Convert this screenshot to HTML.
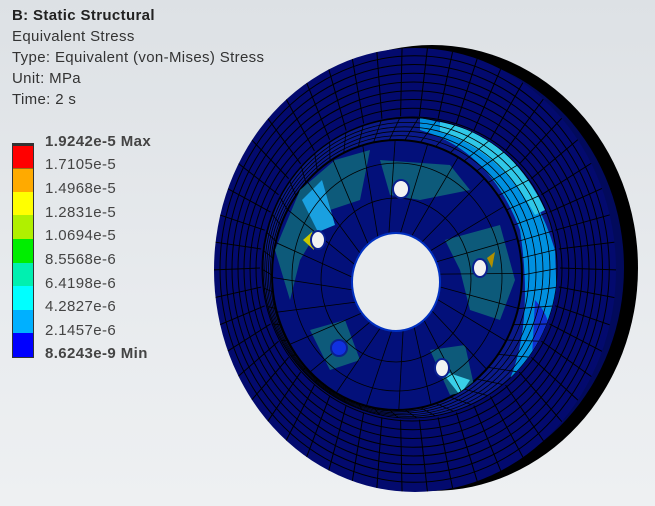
<!DOCTYPE html>
<html><head><meta charset="utf-8"><style>
html,body{margin:0;padding:0}
body{width:655px;height:506px;overflow:hidden;background:linear-gradient(180deg,#dde1e5 0%,#e8ebee 60%,#eef0f2 100%);font-family:"Liberation Sans",sans-serif;position:relative;color:#333}
.t{position:absolute;left:12px;font-size:15px;letter-spacing:0.35px;line-height:16px;white-space:nowrap}
.b{font-weight:bold;color:#222}
.lab{position:absolute;left:45px;font-size:15px;letter-spacing:0.4px;line-height:16px;color:#444;white-space:nowrap}
.bar{position:absolute;left:12px;width:20px;border:1px solid #333}
svg{position:absolute;left:0;top:0}
</style></head><body>
<svg width="655" height="506" viewBox="0 0 655 506">
<defs><clipPath id="face"><ellipse cx="415" cy="270" rx="201" ry="222"/></clipPath>
<clipPath id="hub"><ellipse cx="397" cy="275" rx="125" ry="135"/></clipPath>
<clipPath id="wall"><ellipse cx="410" cy="268" rx="147" ry="150"/></clipPath></defs>
<ellipse cx="432" cy="268" rx="206" ry="223" fill="#000"/>
<ellipse cx="428" cy="268" rx="196" ry="214" fill="#020a5c"/>
<ellipse cx="415" cy="270" rx="201" ry="222" fill="#030a6e"/>
<g id="outer" clip-path="url(#face)" stroke="#000" stroke-width="1" fill="none"></g>
<ellipse cx="410" cy="268" rx="147" ry="150" fill="#0a1a8a" stroke="#000"/>
<g clip-path="url(#wall)">
<path d="M420 118 Q520 135 555 250 L558 330 Q545 390 520 405 L505 390 Q535 330 520 230 Q490 150 420 130 Z" fill="#0090e0"/>
<path d="M440 122 Q510 135 545 210 L535 215 Q500 150 440 132 Z" fill="#30c8e8"/>
<path d="M535 300 Q555 320 552 360 L530 395 Z" fill="#1030d0"/>
</g>
<g id="wallmesh" clip-path="url(#wall)" stroke="#000" stroke-width="0.8" fill="none"></g>
<ellipse cx="397" cy="275" rx="125" ry="135" fill="#03107a" stroke="#000" stroke-width="2"/>
<g clip-path="url(#hub)">
<path d="M275 250 L300 190 L335 160 L370 150 L360 200 L330 210 L300 260 L290 300 Z" fill="#0d5a7a"/>
<path d="M302 200 L322 180 L335 225 L318 232 Z" fill="#1aa0e0"/>
<path d="M380 160 L450 165 L470 190 L420 200 L390 195 Z" fill="#0d5a7a"/>
<path d="M445 240 L500 225 L515 280 L500 320 L470 310 L460 270 Z" fill="#0d5a7a"/>
<path d="M310 330 L345 320 L360 360 L330 370 Z" fill="#0d5a7a"/>
<path d="M430 350 L465 345 L475 390 L450 395 Z" fill="#0d5a7a"/>
<path d="M440 370 L470 380 L460 395 Z" fill="#3ad0e8"/>
<path d="M303 240 L312 232 L314 250 Z" fill="#c8c800"/>
<path d="M487 258 L495 252 L492 268 Z" fill="#b09000"/>
</g>
<g id="hubmesh" clip-path="url(#hub)" stroke="#000" stroke-width="0.8" fill="none"></g>
<ellipse cx="396" cy="282" rx="44" ry="49" fill="#e9ecee" stroke="#0030c0" stroke-width="2"/>
<ellipse cx="401" cy="189" rx="8" ry="9" fill="#f2f2f2" stroke="#0a2090" stroke-width="2"/>
<ellipse cx="318" cy="240" rx="7" ry="9" fill="#f2f2f2" stroke="#0a2090" stroke-width="2"/>
<ellipse cx="480" cy="268" rx="7" ry="9" fill="#f2f2f2" stroke="#0a2090" stroke-width="2"/>
<ellipse cx="339" cy="348" rx="8" ry="8" fill="#1030e0" stroke="#0a2090" stroke-width="2"/>
<ellipse cx="442" cy="368" rx="7" ry="9" fill="#f2f2f2" stroke="#0a2090" stroke-width="2"/>
</svg>
<script>
var ns="http://www.w3.org/2000/svg";
function L(g,x1,y1,x2,y2){var l=document.createElementNS(ns,"line");l.setAttribute("x1",x1);l.setAttribute("y1",y1);l.setAttribute("x2",x2);l.setAttribute("y2",y2);g.appendChild(l);}
function E(g,cx,cy,rx,ry){var e=document.createElementNS(ns,"ellipse");e.setAttribute("cx",cx);e.setAttribute("cy",cy);e.setAttribute("rx",rx);e.setAttribute("ry",ry);g.appendChild(e);}
var o=document.getElementById("outer");
for(var i=0;i<50;i++){var a=i*Math.PI*2/50;L(o,410+150*Math.cos(a),268+152*Math.sin(a),415+205*Math.cos(a),270+226*Math.sin(a));}
for(var k=0;k<8;k++){var f=k/8;E(o,412+3*f,269,150+51*f,152+70*f);}
var w=document.getElementById("wallmesh");
for(var i=0;i<50;i++){var a=i*Math.PI*2/50;L(w,397+125*Math.cos(a),275+135*Math.sin(a),410+150*Math.cos(a),268+152*Math.sin(a));}
for(var k=1;k<5;k++){var f=k/5;E(w,397+13*f,275-7*f,125+22*f,135+15*f);}
var h=document.getElementById("hubmesh");
for(var i=0;i<24;i++){var a=i*Math.PI*2/24+0.1;L(h,396+44*Math.cos(a),282+49*Math.sin(a),397+130*Math.cos(a+0.15),275+140*Math.sin(a+0.15));}
E(h,396,280,75,82);E(h,397,277,105,114);
</script>
<div class="t b" style="top:8px">B: Static Structural</div>
<div class="t" style="top:29px">Equivalent Stress</div>
<div class="t" style="top:50px">Type: Equivalent (von-Mises) Stress</div>
<div class="t" style="top:71px">Unit: MPa</div>
<div class="t" style="top:92px">Time: 2 s</div>
<div class="bar" style="top:143px;height:213px;background:linear-gradient(#333 0,#333 2px,#f00 2px,#f00 24px,#333 24px,#fa0 25px,#fa0 48px,#ff0 48px,#ff0 71px,#b0f000 71px,#b0f000 95px,#0e0 95px,#0e0 119px,#00f0b0 119px,#00f0b0 142px,#0ff 142px,#0ff 166px,#00b0ff 166px,#00b0ff 189px,#00f 189px,#00f 213px)"></div>
<div class="lab b" style="top:134px">1.9242e-5 Max</div>
<div class="lab" style="top:157px">1.7105e-5</div>
<div class="lab" style="top:181px">1.4968e-5</div>
<div class="lab" style="top:205px">1.2831e-5</div>
<div class="lab" style="top:228px">1.0694e-5</div>
<div class="lab" style="top:252px">8.5568e-6</div>
<div class="lab" style="top:276px">6.4198e-6</div>
<div class="lab" style="top:299px">4.2827e-6</div>
<div class="lab" style="top:323px">2.1457e-6</div>
<div class="lab b" style="top:346px">8.6243e-9 Min</div>
</body></html>
